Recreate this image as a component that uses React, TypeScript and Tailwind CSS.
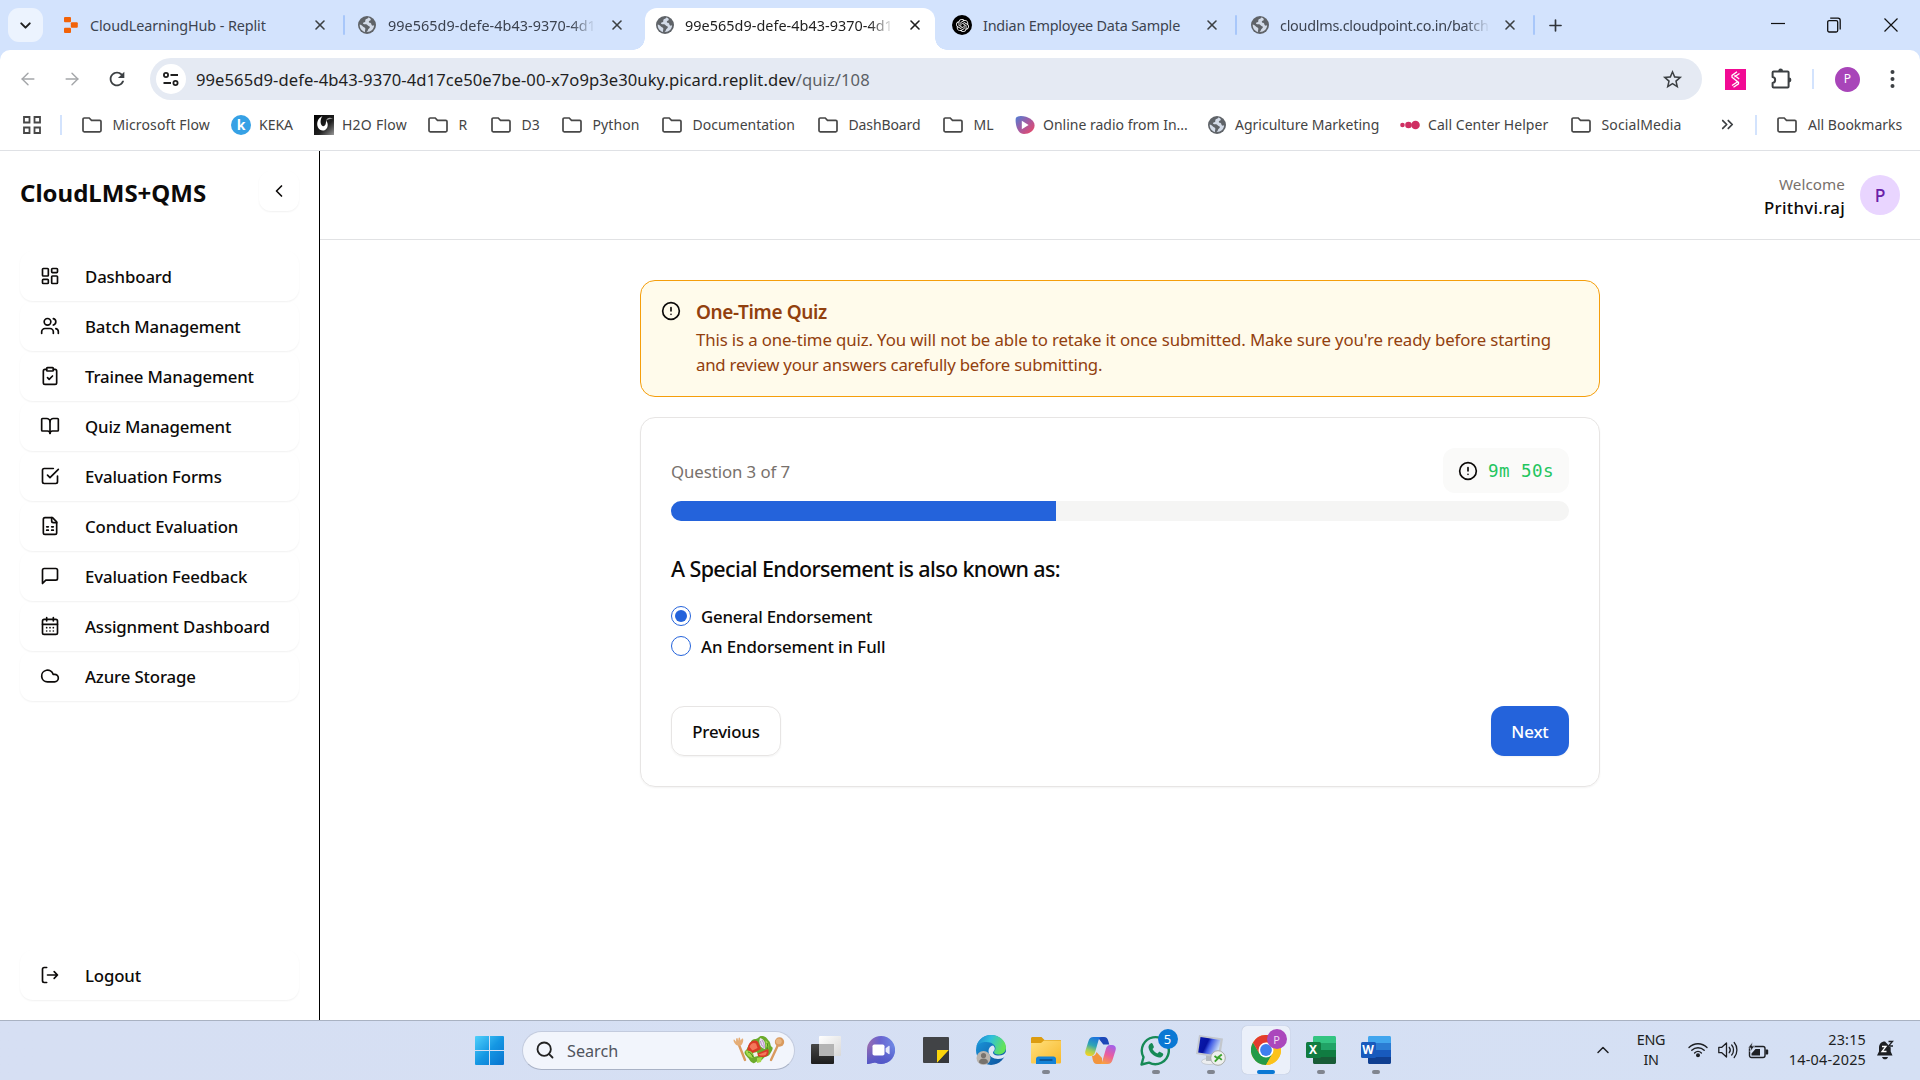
import type { ReactNode } from 'react';
import {
  ArrowLeft,
  ArrowRight,
  BookOpen,
  CalendarDays,
  ChevronDown,
  ChevronLeft,
  ChevronUp,
  ChevronsRight,
  CircleAlert,
  ClipboardCheck,
  Cloud,
  LayoutDashboard,
  Plus,
  Search,
  Users,
  X,
} from 'lucide-react';
import { MdRefresh, MdStarOutline } from 'react-icons/md';
import { SiOpenai } from 'react-icons/si';

/* ---------- Browser icons ---------- */

function GlobeIcon() {
  return (
    <svg width="18" height="18" viewBox="0 0 18 18" className="shrink-0">
      <circle cx="9" cy="9" r="9" fill="#5f6368" />
      <path
        d="M10.2 1.6c-.3 1.3-1.8 1.2-2.6 1.9-.8.8.3 1.7-.6 2.4-.9.6-2 .2-2 1.3 0 1.2 1.6 1 2.9 1 1.6 0 1.5 1.4 2.6 1.7.9.2 1.5.4 1.3 1.5-.2 1-1.3 1-1.7 2-.4 1.1-.6 2-1.6 2.6 4.400.2 7.600-3 7.600-7-.6.8-1.700.9-2.300.2-.7-.8-.2-1.700-1.200-2.200-.8-.4-1.600-.2-1.800-1-.3-1.300 1.800-1 2-2.200.1-1-1.100-1.900-2.600-2.200z"
        fill="#d3dbe8"
      />
      <path d="M1.700 8.500c1.300.2 2.300 1 3.200 1.900.8.9 2.300.9 2.400 2 .1 1.400-.6 2.400-.2 3.700C4 15.300 1.600 12.400 1.700 8.500z" fill="#d3dbe8" />
    </svg>
  );
}

function ReplitIcon() {
  return (
    <svg width="14" height="18" viewBox="0 0 14 18" className="shrink-0" fill="#f26207">
      <rect x="0" y="1" width="7" height="5.300" rx="1" />
      <rect x="6.800" y="6.300" width="7" height="5.400" rx="1" />
      <rect x="0" y="11.700" width="7" height="5.300" rx="1" />
    </svg>
  );
}

function OpenAiIcon() {
  return (
    <span className="flex size-5 shrink-0 items-center justify-center rounded-full bg-black text-white">
      <SiOpenai size={13} />
    </span>
  );
}

function FolderIcon() {
  return (
    <svg width="20" height="16" viewBox="0 0 20 16" fill="none" stroke="#474747" strokeWidth="1.700" className="shrink-0">
      <path d="M1 13.600V2.300C1 1.500 1.500 1 2.300 1h4.900l2.300 2.300h8.200c.8 0 1.300.5 1.300 1.300v9c0 .8-.5 1.300-1.300 1.300H2.300C1.500 14.900 1 14.400 1 13.600z" />
    </svg>
  );
}

function KekaIcon() {
  return (
    <span className="flex size-5 shrink-0 items-center justify-center rounded-full bg-[#36a1e5] text-[14px] leading-none font-bold text-white">
      k
    </span>
  );
}

function H2OIcon() {
  return (
    <svg width="20" height="20" viewBox="0 0 20 20" className="shrink-0">
      <defs>
        <linearGradient id="h2o" x1="0" y1="0" x2="1" y2="1">
          <stop offset="0" stopColor="#000" />
          <stop offset=".6" stopColor="#222" />
          <stop offset="1" stopColor="#999" />
        </linearGradient>
      </defs>
      <rect width="20" height="20" fill="url(#h2o)" />
      <path d="M8.500 1C4 3 2 8 4 12.500c2 4 7 4 9 .5 1.500-3 .5-6-1-7.500.3 4-1.500 6.500-3.500 5.500C6 9.500 6 4.500 8.500 1z" fill="#fff" />
      <path d="M19 3.500c-4-1.500-6-.5-7 2.500 2-2 4-2 7-2.500z" fill="#aaa" />
    </svg>
  );
}

function RadioIcon() {
  return (
    <svg width="20" height="20" viewBox="0 0 20 20" className="shrink-0">
      <defs>
        <linearGradient id="radio" x1="0" y1="0" x2="1" y2="1">
          <stop offset="0" stopColor="#4d7fd6" />
          <stop offset=".5" stopColor="#a8599f" />
          <stop offset="1" stopColor="#f4475f" />
        </linearGradient>
      </defs>
      <path d="M.6 5C.6 2 3 .8 6 .9c7 .3 13.600 4.100 13.600 9.600 0 5-5.600 8.500-10.600 8.500C3.500 19 .6 12 .6 5z" fill="url(#radio)" />
      <path d="M6.800 5.800v8.400l6.800-4.200z" fill="#fff" />
    </svg>
  );
}

function CallIcon() {
  return (
    <svg width="20" height="10" viewBox="0 0 20 10" className="shrink-0" fill="#cf2e62">
      <circle cx="2.500" cy="5" r="2.300" />
      <circle cx="8.500" cy="5" r="3.300" />
      <circle cx="15.500" cy="5" r="4.300" />
    </svg>
  );
}

function TuneIcon() {
  return (
    <svg width="18" height="16" viewBox="0 0 18 16" fill="none" stroke="#1f1f1f" strokeWidth="1.800">
      <circle cx="4" cy="4" r="2.100" />
      <path d="M8.500 4H16M1.500 12H9" />
      <circle cx="13.500" cy="12" r="2.100" />
    </svg>
  );
}

function ExtensionIcon() {
  return (
    <svg width="21" height="21" viewBox="0 0 21 21" className="shrink-0">
      <path
        d="M2.600 3.600h14c.6 0 1 .4 1 1v14c0 .6-.4 1-1 1h-14c-.6 0-1-.4-1-1v-3.700c3.400-.4 3.400-5.400 0-5.800V4.600c0-.6.4-1 1-1z"
        fill="none"
        stroke="#3c4043"
        strokeWidth="2"
        strokeLinejoin="round"
      />
      <path d="M7.200 3a2.400 2.400 0 0 1 4.800 0zM18 9.600a2.400 2.400 0 0 1 0 4.800z" fill="#3c4043" />
    </svg>
  );
}

/* ---------- Browser chrome ---------- */

function Tab({
  icon,
  title,
  width,
  label,
  active = false,
  fade = false,
}: {
  icon: ReactNode;
  title: string;
  width: string;
  label: string;
  active?: boolean;
  fade?: boolean;
}) {
  return (
    <div className={`flex h-[42px] shrink-0 items-center ${width}`}>
      <span className="flex w-5 shrink-0 justify-center">{icon}</span>
      <span
        className={`pt-px text-[14.4px] whitespace-nowrap ${label} ${active ? 'text-[#1f1f1f]' : 'text-[#3c4350]'} ${
          fade ? '[mask-image:linear-gradient(to_right,black_88%,transparent)]' : ''
        }`}
      >
        {title}
      </span>
      <X size={16} strokeWidth={2.4} className={`ml-auto shrink-0 ${active ? 'text-[#1f1f1f]' : 'text-[#3c4043]'}`} />
    </div>
  );
}

function TabSeparator({ className }: { className: string }) {
  return <span className={`h-5 w-[2px] shrink-0 rounded-full bg-[#a8c7fa] ${className}`} />;
}

function TabStrip() {
  return (
    <div className="flex h-[50px] items-center bg-[#d3e3fd]">
      <button className="ml-2 flex h-[34px] w-[35px] shrink-0 items-center justify-center rounded-[11px] bg-[#ecf3fe]">
        <ChevronDown size={17} strokeWidth={2.8} className="text-[#1f1f1f]" />
      </button>
      <div className="ml-[18px] flex shrink-0 items-center">
        <Tab icon={<ReplitIcon />} title="CloudLearningHub - Replit" width="w-[267px]" label="ml-[9px] w-[190px] tracking-[-0.007em]" />
      </div>
      <TabSeparator className="ml-[15px]" />
      <div className="ml-[12px] flex shrink-0 items-center">
        <Tab icon={<GlobeIcon />} title="99e565d9-defe-4b43-9370-4d1" width="w-[268px]" label="ml-[11px] w-[208px] tracking-[0.003em]" fade />
      </div>
      {/* Active tab with its flared feet */}
      <div className="relative ml-5 flex h-[42px] w-[290px] shrink-0 items-center self-end rounded-t-[12px] bg-white pr-[12px] pl-[10px]">
        <span className="absolute bottom-0 -left-[12px] size-[12px] bg-[radial-gradient(circle_at_0_0,#d3e3fd_11.5px,white_12px)]" />
        <span className="absolute -right-[12px] bottom-0 size-[12px] bg-[radial-gradient(circle_at_100%_0,#d3e3fd_11.5px,white_12px)]" />
        <div className="-mt-2 w-full">
          <Tab icon={<GlobeIcon />} title="99e565d9-defe-4b43-9370-4d1" width="w-[268px]" label="ml-[10px] w-[209px] tracking-[0.003em]" active fade />
        </div>
      </div>
      <div className="ml-[17px] flex shrink-0 items-center">
        <Tab icon={<OpenAiIcon />} title="Indian Employee Data Sample" width="w-[268px]" label="ml-[11px] w-[210px] tracking-[-0.014em]" />
      </div>
      <TabSeparator className="ml-[15px]" />
      <div className="ml-[13px] flex shrink-0 items-center">
        <Tab icon={<GlobeIcon />} title="cloudlms.cloudpoint.co.in/batch" width="w-[268px]" label="ml-[10px] w-[210px] tracking-[-0.018em]" fade />
      </div>
      <TabSeparator className="ml-[15px]" />
      <Plus size={19} strokeWidth={2.1} className="ml-[11px] shrink-0 text-[#30343a]" />
      <div className="ml-auto flex items-center pr-[22px] text-[#111]">
        <svg width="14" height="14" viewBox="0 0 14 14" className="mr-[42px]">
          <path d="M0 5.500h14" stroke="currentColor" strokeWidth="1.200" />
        </svg>
        <svg width="14" height="16" viewBox="0 0 14 16" fill="none" stroke="currentColor" strokeWidth="1.300" className="mr-[43px]">
          <rect x=".7" y="3.600" width="10" height="11.400" rx="1.500" />
          <path d="M3.200 1.200H11c1.300 0 2.200.9 2.200 2.200v9" />
        </svg>
        <svg width="14" height="14" viewBox="0 0 14 14" fill="none" stroke="currentColor" strokeWidth="1.200">
          <path d="M.5.5l13 13M13.500.5l-13 13" />
        </svg>
      </div>
    </div>
  );
}

function Toolbar() {
  return (
    <div className="bg-[#d3e3fd]">
      <div className="flex h-[58px] items-center rounded-t-[10px] bg-white">
        <ArrowLeft size={20} strokeWidth={1.7} className="ml-[18px] text-[#a4a6a9]" />
        <ArrowRight size={20} strokeWidth={1.7} className="ml-[24px] text-[#a4a6a9]" />
        <MdRefresh size={22} className="ml-[24px] text-[#3c4043]" />
        <div className="ml-[22px] flex h-[42px] w-[1552px] items-center rounded-full bg-[#e5eaf3] pr-[18px] pl-[6px]">
          <span className="flex size-[30px] items-center justify-center rounded-full bg-white">
            <TuneIcon />
          </span>
          <span className="ml-[10px] pt-[2px] text-[16.6px] tracking-[0.004em] whitespace-nowrap text-[#1f1f1f]">
            99e565d9-defe-4b43-9370-4d17ce50e7be-00-x7o9p3e30uky.picard.replit.dev
            <span className="text-[#5b5f65]">/quiz/108</span>
          </span>
          <MdStarOutline size={23} className="ml-auto text-[#3c4043]" />
        </div>
        <span className="ml-[23px] flex h-[21px] w-[21px] items-center justify-center bg-[#f20a94]">
          <svg width="11" height="17" viewBox="0 0 11 17" fill="none" stroke="#fff" strokeWidth="1.300">
            <path d="M7 .8L2 4.400v1.800l6.500 5.200v1.500l-5 3.400M9.500 2.500L4.300 6M7.200 11L2 14.500M4.500 4.300l4.700 3.600" />
          </svg>
        </span>
        <span className="ml-[25px] -mt-[2px]">
          <ExtensionIcon />
        </span>
        <span className="ml-[20px] h-5 w-[2px] bg-[#d3e3fd]" />
        <span className="ml-[21px] flex size-[25px] items-center justify-center rounded-full bg-[#a845b9] text-[12px] leading-none text-white">
          P
        </span>
        <svg width="5" height="20" viewBox="0 0 5 20" className="ml-[30px]" fill="#3c4043">
          <circle cx="2.500" cy="3" r="2" />
          <circle cx="2.500" cy="10" r="2" />
          <circle cx="2.500" cy="17" r="2" />
        </svg>
      </div>
    </div>
  );
}

const bookmarks: { icon: 'folder' | 'keka' | 'h2o' | 'radio' | 'globe' | 'call'; label: string; width: string; tracking: string }[] = [
  { icon: 'folder', label: 'Microsoft Flow', width: 'w-[149px]', tracking: 'tracking-[0.008em]' },
  { icon: 'keka', label: 'KEKA', width: 'w-[83px]', tracking: 'tracking-normal' },
  { icon: 'h2o', label: 'H2O Flow', width: 'w-[114px]', tracking: 'tracking-[0.017em]' },
  { icon: 'folder', label: 'R', width: 'w-[63px]', tracking: 'tracking-normal' },
  { icon: 'folder', label: 'D3', width: 'w-[71px]', tracking: 'tracking-normal' },
  { icon: 'folder', label: 'Python', width: 'w-[100px]', tracking: 'tracking-[0.006em]' },
  { icon: 'folder', label: 'Documentation', width: 'w-[156px]', tracking: 'tracking-normal' },
  { icon: 'folder', label: 'DashBoard', width: 'w-[125px]', tracking: 'tracking-[-0.008em]' },
  { icon: 'folder', label: 'ML', width: 'w-[72px]', tracking: 'tracking-normal' },
  { icon: 'radio', label: 'Online radio from In...', width: 'w-[192px]', tracking: 'tracking-normal' },
  { icon: 'globe', label: 'Agriculture Marketing', width: 'w-[193px]', tracking: 'tracking-normal' },
  { icon: 'call', label: 'Call Center Helper', width: 'w-[171px]', tracking: 'tracking-[0.003em]' },
  { icon: 'folder', label: 'SocialMedia', width: 'w-[147px]', tracking: 'tracking-[0.009em]' },
];

const bookmarkIcons = {
  folder: <FolderIcon />,
  keka: <KekaIcon />,
  h2o: <H2OIcon />,
  radio: <RadioIcon />,
  globe: <GlobeIcon />,
  call: <CallIcon />,
};

function BookmarksBar() {
  return (
    <div className="flex h-[43px] items-center border-b border-[#dfe1e5] bg-white pb-[9px] text-[14px] whitespace-nowrap text-[#444]">
      <svg width="18" height="18" viewBox="0 0 18 18" fill="none" stroke="#474747" strokeWidth="1.800" className="ml-[23px] shrink-0">
        <path d="M1 1h5.500v5.500H1zM11.500 1H17v5.500h-5.500zM1 11.500h5.500V17H1zM11.500 11.500H17V17h-5.500z" />
      </svg>
      <span className="ml-[19px] h-5 w-[2px] shrink-0 bg-[#d3e3fd]" />
      <div className="ml-[20px] flex shrink-0">
        {bookmarks.map((b) => (
          <div key={b.label} className={`flex h-5 shrink-0 items-center ${b.width} ${b.icon === 'folder' ? 'gap-[10.5px]' : 'gap-[8px]'}`}>
            <span className="flex w-5 shrink-0 justify-center">{bookmarkIcons[b.icon]}</span>
            <span className={b.tracking}>{b.label}</span>
          </div>
        ))}
      </div>
      <ChevronsRight size={19} strokeWidth={2.2} className="text-[#3c4043]" />
      <span className="ml-[18px] h-5 w-[2px] shrink-0 bg-[#d3e3fd]" />
      <div className="ml-[20px] flex items-center gap-[11px]">
        <FolderIcon />
        <span>All Bookmarks</span>
      </div>
    </div>
  );
}

/* ---------- Application ---------- */

function StrokeIcon({ children }: { children: ReactNode }) {
  return (
    <svg width="20" height="20" viewBox="0 0 24 24" fill="none" stroke="currentColor" strokeWidth="2" strokeLinecap="round" strokeLinejoin="round">
      {children}
    </svg>
  );
}

const navItems: { icon: ReactNode; label: string }[] = [
  { icon: <LayoutDashboard size={20} />, label: 'Dashboard' },
  { icon: <Users size={20} />, label: 'Batch Management' },
  { icon: <ClipboardCheck size={20} />, label: 'Trainee Management' },
  { icon: <BookOpen size={20} />, label: 'Quiz Management' },
  {
    icon: (
      <StrokeIcon>
        <path d="m9 11 3 3L22 4" />
        <path d="M21 12v7a2 2 0 0 1-2 2H5a2 2 0 0 1-2-2V5a2 2 0 0 1 2-2h11" />
      </StrokeIcon>
    ),
    label: 'Evaluation Forms',
  },
  {
    icon: (
      <StrokeIcon>
        <path d="M15 2H6a2 2 0 0 0-2 2v16a2 2 0 0 0 2 2h12a2 2 0 0 0 2-2V7Z" />
        <path d="M14 2v4a2 2 0 0 0 2 2h4" />
        <path d="M8 13h2M14 13h2M8 17h2M14 17h2" />
      </StrokeIcon>
    ),
    label: 'Conduct Evaluation',
  },
  {
    icon: (
      <StrokeIcon>
        <path d="M21 15a2 2 0 0 1-2 2H7l-4 4V5a2 2 0 0 1 2-2h14a2 2 0 0 1 2 2z" />
      </StrokeIcon>
    ),
    label: 'Evaluation Feedback',
  },
  { icon: <CalendarDays size={20} />, label: 'Assignment Dashboard' },
  { icon: <Cloud size={20} />, label: 'Azure Storage' },
];

function NavItem({ icon, label }: { icon: ReactNode; label: string }) {
  return (
    <div className="flex h-[50px] items-center rounded-[13px] px-5 text-[#0c0a09] shadow-[0_1px_2px_rgba(0,0,0,0.06)]">
      <span className="shrink-0">{icon}</span>
      <span className="ml-[25px] pt-[2px] text-[16.8px] font-medium tracking-[-0.008em] whitespace-nowrap">{label}</span>
    </div>
  );
}

function Sidebar() {
  return (
    <aside className="flex h-full w-80 shrink-0 flex-col border-r border-black px-5 pb-5">
      <div className="flex h-[60px] items-center justify-between pt-5">
        <h1 className="pt-[4px] text-[24px] leading-[36px] font-bold text-[#0c0a09]">CloudLMS+QMS</h1>
        <button className="flex size-10 items-center justify-center rounded-[12px] shadow-[0_1px_2px_rgba(0,0,0,0.06)]">
          <ChevronLeft size={20} className="text-[#0c0a09]" />
        </button>
      </div>
      <nav className="mt-10">
        {navItems.map((n) => (
          <NavItem key={n.label} icon={n.icon} label={n.label} />
        ))}
      </nav>
      <div className="mt-auto">
        <NavItem
          icon={
            <StrokeIcon>
              <path d="m17 16 4-4-4-4M21 12H9" />
              <path d="M8 21H5a2 2 0 0 1-2-2V5a2 2 0 0 1 2-2h3" />
            </StrokeIcon>
          }
          label="Logout"
        />
      </div>
    </aside>
  );
}

function Radio({ label, tracking, checked = false }: { label: string; tracking: string; checked?: boolean }) {
  return (
    <label className="flex h-5 items-center gap-[10px]">
      <span className="flex size-5 items-center justify-center rounded-full border border-[#2463db]">
        {checked && <span className="size-3 rounded-full bg-[#2463db]" />}
      </span>
      <span className={`pt-px text-[16.8px] font-medium ${tracking}`}>{label}</span>
    </label>
  );
}

function QuizPage() {
  return (
    <main className="mx-auto mt-10 w-[960px]">
      <section className="flex h-[117px] rounded-[15px] border border-[#f59e0b] bg-[#fffbeb] pt-5 pl-5 text-[#92400e]">
        <CircleAlert size={20} className="shrink-0 text-[#0c0a09]" />
        <div className="ml-[15px] whitespace-nowrap">
          <h2 className="pt-px text-[19px] leading-[21px] font-semibold tracking-[-0.019em]">One-Time Quiz</h2>
          <p className="mt-1 text-[16.8px] leading-[25px]">
            <span className="block tracking-[-0.0069em]">
              This is a one-time quiz. You will not be able to retake it once submitted. Make sure you're ready before starting
            </span>
            <span className="block tracking-[-0.0132em]">and review your answers carefully before submitting.</span>
          </p>
        </div>
      </section>

      <section className="mt-5 h-[370px] rounded-[15px] border border-[#e7e5e4] px-[30px] pt-[30px] text-[#0c0a09] shadow-[0_1px_2px_rgba(0,0,0,0.05)]">
        <div className="flex h-[45px] items-center justify-between">
          <span className="pt-[2px] text-[16.8px] tracking-[-0.0044em] text-[#78716c]">Question 3 of 7</span>
          <div className="flex h-[45px] w-[126px] items-center rounded-[12px] bg-[#fafaf9] pl-[15px]">
            <CircleAlert size={20} />
            <span className="ml-[10px] pt-[2px] font-['DejaVu_Sans_Mono',monospace] text-[17.5px] tracking-[0.027em] whitespace-nowrap text-[#22c55e]">
              9m 50s
            </span>
          </div>
        </div>
        <div className="mt-2 h-5 overflow-hidden rounded-full bg-[#f5f5f4]">
          <div className="h-full w-3/7 bg-[#2463db]" />
        </div>
        <h3 className="mt-[33px] text-[21.5px] leading-[30px] font-medium tracking-[-0.029em]">
          A Special Endorsement is also known as:
        </h3>
        <div className="mt-[22px] flex flex-col gap-[10px]">
          <Radio label="General Endorsement" tracking="tracking-[-0.012em]" checked />
          <Radio label="An Endorsement in Full" tracking="tracking-[-0.004em]" />
        </div>
        <div className="mt-[50px] flex justify-between text-[16.8px] font-medium tracking-[-0.008em]">
          <button className="flex h-[50px] w-[110px] items-center justify-center rounded-[13px] border border-[#e7e5e4] pt-px shadow-[0_1px_2px_rgba(0,0,0,0.05)]">
            Previous
          </button>
          <button className="flex h-[50px] w-[78px] items-center justify-center rounded-[13px] bg-[#2463db] pt-px text-white shadow-[0_1px_2px_rgba(0,0,0,0.05)]">
            Next
          </button>
        </div>
      </section>
    </main>
  );
}

function Application() {
  return (
    <div className="flex h-[869px] bg-white">
      <Sidebar />
      <div className="flex-1">
        <header className="flex h-[89px] items-center justify-end border-b border-[#e1e2e4] pr-5">
          <div className="mt-[4px] text-right">
            <div className="text-[15.2px] leading-5 tracking-[0.005em] text-[#78716c]">Welcome</div>
            <div className="text-[16.8px] leading-[27px] font-medium tracking-[0.018em] text-[#0c0a09]">Prithvi.raj</div>
          </div>
          <span className="ml-[15px] flex size-10 items-center justify-center rounded-full bg-[#e9d5ff] pt-px text-[17.5px] font-medium text-[#6b21a8]">
            P
          </span>
        </header>
        <QuizPage />
      </div>
    </div>
  );
}

/* ---------- Taskbar ---------- */

function WindowsLogo() {
  return (
    <svg width="29" height="29" viewBox="0 0 29 29">
      <defs>
        <linearGradient id="win" gradientUnits="userSpaceOnUse" x1="0" y1="0" x2="29" y2="29">
          <stop offset="0" stopColor="#4fd0fb" />
          <stop offset=".5" stopColor="#1597e3" />
          <stop offset="1" stopColor="#0873cf" />
        </linearGradient>
      </defs>
      <path d="M1 0h13v14H0V1a1 1 0 0 1 1-1zM15 0h13a1 1 0 0 1 1 1v13H15zM0 15h14v14H1a1 1 0 0 1-1-1zM15 15h14v13a1 1 0 0 1-1 1H15z" fill="url(#win)" />
    </svg>
  );
}

function SaladArt() {
  return (
    <svg width="52" height="28" viewBox="0 0 52 28">
      <path d="M6 9l6 15" stroke="#d99a5e" strokeWidth="2.400" strokeLinecap="round" />
      <path d="M.8 3.500c1.500 0 1.200 2 2.400 2-.4-2 0-3.600.8-3.600.9 0 .7 1.800 1.300 2.800.2-1.700.1-3.300 1-3.300s1 2 1.300 3.200C8.500 3.200 9 2 9.800 2.600c.9.7.3 3.900-.8 5.600-1 1.600-3.900 2.200-5.700.8C1.600 7.700-.2 4.300.8 3.500z" fill="#e5ad76" />
      <path d="M45 9l-7 15" stroke="#d99a5e" strokeWidth="2.400" strokeLinecap="round" />
      <circle cx="46.500" cy="6" r="4.700" fill="#d99a5e" />
      <circle cx="45.800" cy="5.300" r="2.900" fill="#e8b581" />
      <path d="M12 15c2-1 2-4 4-6s2-6 6-6 4-4 8-3 4 3 6 5 1 5 3 6-1 5-2 7-3 2-5 3-3 4-6 4-4 3-6 2-3-2-4-4-6-5-4-8z" fill="#6cab2c" />
      <path d="M15 11c1-6 7-8 10-5l3 7-8 4-6-3z" fill="#d93a26" />
      <path d="M23 18l12-5c2 5-1 8-4 8s-7 0-8-3z" fill="#d93a26" />
      <path d="M16.500 11c1-3.500 4-5 6.500-3.500l1.500 4.500-5 2.500z" fill="#f4775a" />
      <path d="M25.500 18.500l8-3c.5 2.500-1 4-3 4s-4 0-5-1z" fill="#f4775a" />
      <path d="M27 2c4 1 6 5 5 11-4-1-7-5-5-11z" fill="#e9dff0" />
      <path d="M29 4c2 3 2.500 5 2 8M27.500 5c.5 3 1.500 5 3 6" stroke="#a57bb7" strokeWidth=".8" fill="none" />
      <path d="M32.500 4c3 2 4 6 2.500 9l-2-3zM12.500 15c4-1 6 0 8 4l-1 3c-4-1-6-3-7-7zM24 22l5-1-1 5-4 1z" fill="#a5d84c" />
      <path d="M20 17l4-1 1 4-4 1z" fill="#f3efe9" />
      <path d="M15 16c2 0 4 2 5 5M34 7c1 3 1 4 0 6" stroke="#3f8419" strokeWidth="1" fill="none" />
    </svg>
  );
}

function TaskViewIcon() {
  return (
    <svg width="30" height="28" viewBox="0 0 30 28">
      <defs>
        <linearGradient id="tv" x1="0" y1="0" x2="0" y2="1">
          <stop offset="0" stopColor="#474747" />
          <stop offset="1" stopColor="#1d1d1d" />
        </linearGradient>
        <linearGradient id="tv2" x1="0" y1="0" x2="1" y2="1">
          <stop offset="0" stopColor="#fff" />
          <stop offset="1" stopColor="#d8d8d8" />
        </linearGradient>
      </defs>
      <rect x="0" y="8" width="23" height="20" rx="1" fill="url(#tv)" />
      <rect x="8" y="0" width="22" height="20" rx="1" fill="url(#tv2)" />
      <rect x="8" y="8" width="15" height="12" fill="#b4b4b4" />
    </svg>
  );
}

function ChatIcon() {
  return (
    <svg width="28" height="28" viewBox="0 0 28 28">
      <defs>
        <linearGradient id="chat" x1="0" y1="0" x2="1" y2="0">
          <stop offset="0" stopColor="#9a6cae" />
          <stop offset=".45" stopColor="#6a63cf" />
          <stop offset="1" stopColor="#6d8ae6" />
        </linearGradient>
        <linearGradient id="chat2" x1="0" y1="0" x2="0" y2="1">
          <stop offset=".35" stopColor="#5257c7" stopOpacity="0" />
          <stop offset="1" stopColor="#5257c7" />
        </linearGradient>
      </defs>
      <path d="M14 0a14 14 0 1 1-6 26.600L1 28c-1 .2-1.200-.4-1-1V14A14 14 0 0 1 14 0z" fill="url(#chat)" />
      <path d="M14 0a14 14 0 1 1-6 26.600L1 28c-1 .2-1.200-.4-1-1V14A14 14 0 0 1 14 0z" fill="url(#chat2)" />
      <rect x="5.500" y="8.500" width="12" height="11" rx="1.800" fill="#fff" />
      <path d="M18.600 12.200l3-2.300c.5-.3 1 0 1 .6v7c0 .6-.5.9-1 .6l-3-2.300z" fill="#e6e9fb" />
    </svg>
  );
}

function NotesIcon() {
  return (
    <svg width="28" height="28" viewBox="0 0 28 28">
      <rect x="1" y="1" width="26" height="26" rx="1" fill="#414346" />
      <path d="M15 14h12L15 27z" fill="#fbd50b" />
      <path d="M27 14v13H15z" fill="#35373a" />
    </svg>
  );
}

function EdgeIcon() {
  return (
    <svg width="32" height="32" viewBox="0 0 32 32">
      <defs>
        <linearGradient id="edgeA" x1="0" y1="0" x2="1" y2=".3">
          <stop offset="0" stopColor="#1a7fd2" />
          <stop offset=".5" stopColor="#2fc0dc" />
          <stop offset="1" stopColor="#62e35a" />
        </linearGradient>
        <linearGradient id="edgeB" x1="0" y1="0" x2="1" y2="1">
          <stop offset="0" stopColor="#1b9ce0" />
          <stop offset="1" stopColor="#0c4f9a" />
        </linearGradient>
      </defs>
      <circle cx="16" cy="16" r="15" fill="url(#edgeB)" />
      <path d="M1.300 13C2.500 6 8.500 1 16 1c8.500 0 15 6 15 12.500 0 4.500-3.500 7-7.500 7-3 0-4.500-1.200-4.500-2.500 0-1 1.500-1.500 1.500-4 0-3-4-6-9-6-5 0-9 2-10.200 5z" fill="url(#edgeA)" />
      <path d="M31.500 17c-1.500 3-4 4.500-8 4.500-4 0-5.500-1.500-5.500-3 0-1.200 1.800-1.500 1.800-4 0-1-.8-2.300-1.800-3-2.500.3-4.500 2.500-4.500 5.500 0 5 4.500 8 9.500 8 3.500 0 6-1 7.500-3z" fill="#dde6f6" />
      <circle cx="8.500" cy="24" r="7" fill="#b9b4ae" />
      <circle cx="8.500" cy="21.500" r="2.600" fill="#77726d" />
      <path d="M4 28.500c0-3 2-4 4.500-4s4.500 1 4.500 4c-2.500 2-6.500 2-9 0z" fill="#77726d" />
    </svg>
  );
}

function ExplorerIcon() {
  return (
    <svg width="30" height="27" viewBox="0 0 30 27">
      <defs>
        <linearGradient id="fold" x1="0" y1="0" x2="1" y2="1">
          <stop offset="0" stopColor="#ffe07d" />
          <stop offset="1" stopColor="#f8b82a" />
        </linearGradient>
      </defs>
      <path d="M0 1.500C0 .6.600 0 1.500 0h9l3 3H29c.6 0 1 .4 1 1v5H0z" fill="#dc9c10" />
      <path d="M0 6h10l3-2.500h16c.6 0 1 .4 1 1V25c0 1-.6 1.500-1.500 1.500h-27C.6 26.500 0 26 0 25z" fill="url(#fold)" />
      <path d="M5 27v-5c0-1.600 1-2.600 2.500-2.600h15c1.500 0 2.500 1 2.500 2.600v5z" fill="#1382d6" />
      <path d="M9 23h12" stroke="#0c4c86" strokeWidth="1.300" strokeLinecap="round" />
    </svg>
  );
}

function CopilotIcon() {
  return (
    <svg width="31" height="29" viewBox="0 0 31 29">
      <defs>
        <linearGradient id="copA" x1=".6" y1="0" x2=".3" y2="1">
          <stop offset="0" stopColor="#1d73dd" />
          <stop offset=".45" stopColor="#2fa5b5" />
          <stop offset=".75" stopColor="#a8cf55" />
          <stop offset="1" stopColor="#f4d223" />
        </linearGradient>
        <linearGradient id="copB" x1=".7" y1="0" x2=".3" y2="1">
          <stop offset="0" stopColor="#a561e8" />
          <stop offset=".5" stopColor="#ea5d9f" />
          <stop offset="1" stopColor="#f9a33f" />
        </linearGradient>
      </defs>
      <path d="M14 1h5c2.500 0 3.600 1.500 4.300 4l1 3.500h-6L14 3z" fill="#1c48b8" />
      <path d="M8.500 1H17c-2 0-3 1.500-3.700 4l-3 10.500c-.8 2.800-2 4.500-4.500 4.500H4c-3 0-4.500-2-3.500-5.500l3-9.500C4.400 2.500 5.500 1 8.500 1z" fill="url(#copA)" />
      <path d="M17 28h-5c-2.500 0-3.500-1.500-4.200-4L7 20c3 0 4-2 4.500-4l5.500 6z" fill="#f2953d" />
      <path d="M22.500 28H14c2 0 3-1.500 3.700-4l3-10.500C21.500 10.700 22.700 9 25.200 9H27c3 0 4.500 2 3.500 5.500l-3 9.500c-.9 2.500-2 4-5 4z" fill="url(#copB)" />
    </svg>
  );
}

function WhatsAppIcon() {
  return (
    <svg width="31" height="31" viewBox="0 0 31 31">
      <path d="M1.500 29.500l2-7.300A13.500 13.500 0 1 1 9 27.600z" fill="none" stroke="#168a56" strokeWidth="2.400" strokeLinejoin="round" />
      <path d="M11 8.200c.6-.3 1.300 0 1.600.6l1.200 2.700c.2.500 0 1-.3 1.400l-1 1.200c1.200 2.200 2.800 3.600 5 4.500l1.200-1.400c.4-.4.900-.5 1.400-.3l2.500 1.300c.6.3.8.9.6 1.500-.6 2-2.300 3-4.200 2.800-5.200-.7-9.800-5-10.500-10-.2-1.900.8-3.600 2.500-4.300z" fill="#168a56" />
    </svg>
  );
}

function RemoteDesktopIcon() {
  return (
    <svg width="30" height="31" viewBox="0 0 30 31">
      <defs>
        <linearGradient id="scr" x1="0" y1="0" x2="1" y2=".4">
          <stop offset="0" stopColor="#0a1bb0" />
          <stop offset=".45" stopColor="#0612a0" />
          <stop offset=".6" stopColor="#3d58e4" />
          <stop offset="1" stopColor="#c9dcf8" />
        </linearGradient>
      </defs>
      <ellipse cx="13" cy="26.500" rx="7.500" ry="3" fill="#eceef0" stroke="#b6bac0" strokeWidth=".6" />
      <path d="M10 20h7v6h-7z" fill="#b5babf" />
      <path d="M3 0l24 3.500-3 19.500L0 19z" fill="#c3c7cd" />
      <path d="M4.500 2l20 3L22 20.500 2.200 17.500z" fill="url(#scr)" />
      <circle cx="22" cy="23" r="7.300" fill="#eef0ee" stroke="#a8aca8" />
      <path d="M18.500 21l3.300 2.600-3 3M25.800 19.500l-3.300 2.600 3.300 2.800" fill="none" stroke="#3ba32e" strokeWidth="1.900" />
    </svg>
  );
}

function ChromeIcon() {
  return (
    <svg width="30" height="30" viewBox="0 0 30 30">
      <circle cx="15" cy="15" r="15" fill="#fbc21b" />
      <path d="M2 7.500A15 15 0 0 0 15 30l6.500-11.300L15 15l-6.500 3.700z" fill="#249a48" />
      <path d="M15 30a15 15 0 0 0 13-22.500H15L21.500 18.700z" fill="#fbc21b" />
      <path d="M2 7.500A15 15 0 0 1 28 7.500H15L8.500 18.700z" fill="#e33b2e" />
      <circle cx="15" cy="15" r="7.500" fill="#fff" />
      <circle cx="15" cy="15" r="5.900" fill="#3f7fee" />
    </svg>
  );
}

function OfficeIcon({ letter, colors, tile }: { letter: string; colors: [string, string, string, string]; tile: string }) {
  return (
    <span className="relative block h-[28px] w-[30px]">
      <svg width="30" height="28" viewBox="0 0 30 28">
        <path d="M7 1.500C7 .6 7.600 0 8.500 0h20c.9 0 1.500.6 1.500 1.500V7H7z" fill={colors[0]} />
        <path d="M7 7h23v7H7z" fill={colors[1]} />
        <path d="M7 14h23v7H7z" fill={colors[2]} />
        <path d="M7 21h23v5.500c0 .9-.6 1.500-1.500 1.500h-20c-.9 0-1.500-.6-1.500-1.500z" fill={colors[3]} />
      </svg>
      <span className={`absolute top-[6px] left-0 flex h-[16px] w-[15px] items-center justify-center rounded-[1.5px] text-[12px] leading-none font-bold text-white ${tile}`}>
        {letter}
      </span>
    </span>
  );
}

function TaskItem({ children, running = false, active = false, badge }: { children: ReactNode; running?: boolean; active?: boolean; badge?: ReactNode }) {
  return (
    <div className="flex w-[55px] shrink-0 justify-center">
      <div className={`relative flex size-12 items-center justify-center rounded-[5px] ${active ? 'bg-[#ebf0fa] shadow-[0_0_1px_rgba(0,0,0,0.25)]' : ''}`}>
        {children}
        {badge}
        {running && <span className="absolute bottom-0 left-5 h-1 w-2 rounded-full bg-[#80858f]" />}
        {active && <span className="absolute bottom-0 left-[15px] h-1 w-[18px] rounded-full bg-[#0a78d4]" />}
      </div>
    </div>
  );
}

function TrayIcons() {
  return (
    <div className="flex items-center text-[#1d1f23]">
      <svg width="20" height="16" viewBox="0 0 20 16" fill="none" stroke="currentColor" strokeWidth="1.400" strokeLinecap="round">
        <path d="M1 5.500c5-5 13-5 18 0M3.800 8.300c3.500-3.400 8.900-3.400 12.400 0M6.600 11c2-1.900 4.800-1.900 6.800 0" />
        <circle cx="10" cy="13.200" r="1.300" fill="currentColor" />
      </svg>
      <svg width="20" height="18" viewBox="0 0 20 18" fill="none" stroke="currentColor" strokeWidth="1.300" strokeLinecap="round" strokeLinejoin="round" className="ml-[10px]">
        <path d="M.8 6.300h3L8.500 2v14l-4.700-4.300h-3z" />
        <path d="M11.200 6.300c1.200 1.500 1.200 3.900 0 5.400M13.700 4c2.400 2.700 2.400 7.300 0 10M16.200 1.500c3.600 4 3.600 11 0 15" />
      </svg>
      <svg width="21" height="17" viewBox="0 0 21 17" className="ml-[10px]">
        <rect x="1.500" y="4.500" width="15.500" height="11" rx="2" fill="none" stroke="currentColor" strokeWidth="1.400" />
        <path d="M3.500 13.500V11.500l4-4.500h4.500v6.500zM17.500 7.500h1.700c.7 0 1 .4 1 1v3c0 .6-.3 1-1 1h-1.700z" fill="currentColor" />
        <path d="M4.500 0L0 6h2.800L2 10l4.600-6H3.900z" fill="currentColor" stroke="#d6e0f3" strokeWidth=".6" />
      </svg>
    </div>
  );
}

function Taskbar() {
  return (
    <footer className="flex h-[60px] items-center border-t border-[#a9b2c2] bg-linear-to-r from-[#d6dff3] to-[#d5e0f4] pb-px">
      <div className="ml-[475px]">
        <WindowsLogo />
      </div>
      <div className="ml-[18px] flex h-[39px] w-[273px] shrink-0 items-center rounded-full border border-[#c3cbde] border-b-[#a9b2c6] bg-[#f2f5fc] pr-[9px] pl-[12px]">
        <Search size={20} strokeWidth={2.2} className="text-[#222]" />
        <span className="ml-[12px] pt-[2px] text-[16.2px] text-[#50545c]">Search</span>
        <span className="ml-auto">
          <SaladArt />
        </span>
      </div>
      <div className="ml-[3px] flex shrink-0">
        <TaskItem>
          <TaskViewIcon />
        </TaskItem>
        <TaskItem>
          <ChatIcon />
        </TaskItem>
        <TaskItem>
          <NotesIcon />
        </TaskItem>
        <TaskItem>
          <EdgeIcon />
        </TaskItem>
        <TaskItem running>
          <ExplorerIcon />
        </TaskItem>
        <TaskItem>
          <CopilotIcon />
        </TaskItem>
        <TaskItem
          running
          badge={
            <span className="absolute top-[3px] right-[2px] flex size-5 items-center justify-center rounded-full bg-[#0a78d4] text-[13px] leading-none text-white">
              5
            </span>
          }
        >
          <WhatsAppIcon />
        </TaskItem>
        <TaskItem running>
          <RemoteDesktopIcon />
        </TaskItem>
        <TaskItem
          active
          badge={
            <span className="absolute top-[3px] right-[3px] flex size-5 items-center justify-center rounded-full bg-[#ab47bc] text-[11px] leading-none text-[#f0dcf4]">
              P
            </span>
          }
        >
          <ChromeIcon />
        </TaskItem>
        <TaskItem running>
          <OfficeIcon letter="X" colors={['#33c481', '#21a366', '#107c41', '#185c37']} tile="bg-[#107c41]" />
        </TaskItem>
        <TaskItem running>
          <OfficeIcon letter="W" colors={['#41a5ee', '#2b7cd3', '#185abd', '#103f91']} tile="bg-[#185abd]" />
        </TaskItem>
      </div>
      <div className="ml-auto flex items-center pr-[26px] text-[14.4px] text-[#1d1f23]">
        <ChevronUp size={20} strokeWidth={1.8} className="mr-[22px]" />
        <div className="mr-[21px] w-[32px] text-center leading-5 tracking-[-0.02em]">
          <div>ENG</div>
          <div>IN</div>
        </div>
        <TrayIcons />
        <div className="ml-[18px] w-[79px] text-right leading-5 tracking-[0.014em] whitespace-nowrap">
          <div>23:15</div>
          <div>14-04-2025</div>
        </div>
        <svg width="18" height="20" viewBox="0 0 18 20" className="ml-[10px]">
          <path d="M9 1.500c-4 0-6 2.700-6 6v4L1 15.500h15.500l-1.800-4v-4z" fill="currentColor" />
          <path d="M6 17h6c-.5 1.500-1.500 2.300-3 2.300S6.500 18.500 6 17z" fill="currentColor" />
          <path d="M6 6.500h4l-4 5h4.500" fill="none" stroke="#fff" strokeWidth="1.300" />
          <path d="M11 0h7v7h-5z" fill="#d5e0f4" />
          <path d="M12.500 1.500h4l-4 4.500h4.500" fill="none" stroke="currentColor" strokeWidth="1.300" />
        </svg>
      </div>
    </footer>
  );
}

export default function App() {
  return (
    <div className="flex h-[1080px] w-[1920px] flex-col overflow-hidden bg-white font-['Noto_Sans','Open_Sans',sans-serif]">
      <TabStrip />
      <Toolbar />
      <BookmarksBar />
      <Application />
      <Taskbar />
    </div>
  );
}
